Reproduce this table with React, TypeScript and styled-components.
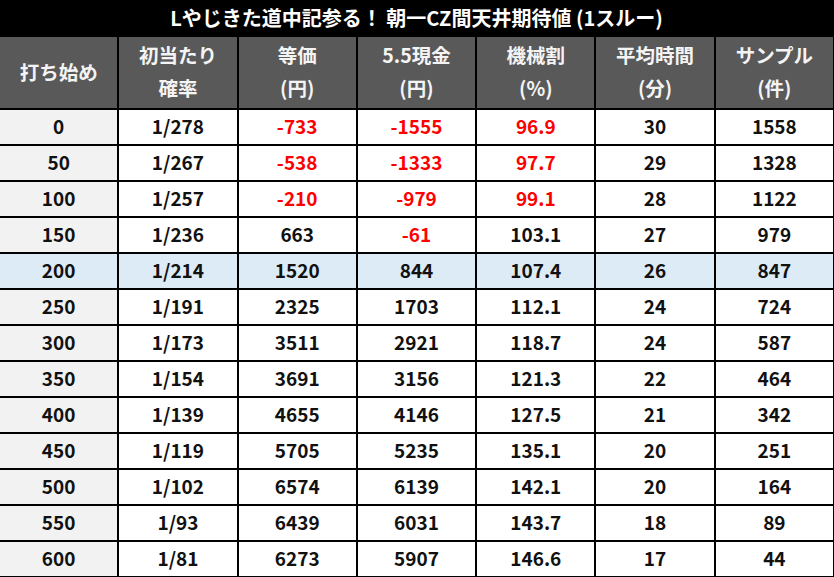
import React from "react";
import styled, { createGlobalStyle } from "styled-components";

const GlobalStyle = createGlobalStyle`
  html, body {
    margin: 0;
    padding: 0;
    background: #ffffff;
  }
  body {
    font-family: "Noto Sans CJK JP", "Noto Sans", sans-serif;
  }
`;

const Wrapper = styled.div`
  width: 834px;
  background: #000;
  padding-right: 1px;
  box-sizing: border-box;
`;

const Title = styled.div`
  height: 37px;
  display: flex;
  align-items: center;
  justify-content: center;
  color: #ffffff;
  font-weight: 700;
  font-size: 20px;
  line-height: 1;
  padding-bottom: 1px;
  box-sizing: border-box;
  background: #000;
  white-space: pre;
`;

const Grid = styled.div`
  display: grid;
  grid-template-columns: repeat(7, 1fr);
  grid-template-rows: 71px;
  grid-auto-rows: 34px;
  gap: 2px;
  padding-bottom: 2px;
  background: #000;
`;

const HeadCell = styled.div`
  background: #595959;
  color: #f4f4f4;
  font-weight: 700;
  font-size: 19.5px;
  line-height: 33px;
  display: flex;
  flex-direction: column;
  align-items: center;
  justify-content: center;
  text-align: center;
  white-space: nowrap;
  padding-bottom: 3px;
  box-sizing: border-box;
`;

const Cell = styled.div<{ $bg: string; $red?: boolean }>`
  background: ${(p) => p.$bg};
  color: ${(p) => (p.$red ? "#ff0000" : "#111111")};
  font-weight: 700;
  font-size: 19px;
  display: flex;
  align-items: center;
  justify-content: center;
  padding-bottom: 3px;
  box-sizing: border-box;
`;

type Row = [string, string, string, string, string, string, string];

const rows: Row[] = [
  ["0", "1/278", "-733", "-1555", "96.9", "30", "1558"],
  ["50", "1/267", "-538", "-1333", "97.7", "29", "1328"],
  ["100", "1/257", "-210", "-979", "99.1", "28", "1122"],
  ["150", "1/236", "663", "-61", "103.1", "27", "979"],
  ["200", "1/214", "1520", "844", "107.4", "26", "847"],
  ["250", "1/191", "2325", "1703", "112.1", "24", "724"],
  ["300", "1/173", "3511", "2921", "118.7", "24", "587"],
  ["350", "1/154", "3691", "3156", "121.3", "22", "464"],
  ["400", "1/139", "4655", "4146", "127.5", "21", "342"],
  ["450", "1/119", "5705", "5235", "135.1", "20", "251"],
  ["500", "1/102", "6574", "6139", "142.1", "20", "164"],
  ["550", "1/93", "6439", "6031", "143.7", "18", "89"],
  ["600", "1/81", "6273", "5907", "146.6", "17", "44"],
];

const headers: string[][] = [
  ["打ち始め"],
  ["初当たり", "確率"],
  ["等価", "(円)"],
  ["5.5現金", "(円)"],
  ["機械割", "(%)"],
  ["平均時間", "(分)"],
  ["サンプル", "(件)"],
];

const isRed = (col: number, v: string) => {
  if (col === 2 || col === 3) return v.startsWith("-");
  if (col === 4) return parseFloat(v) < 100;
  return false;
};

export default function App() {
  return (
    <>
      <GlobalStyle />
      <Wrapper>
        <Title>Lやじきた道中記参る！ 朝一CZ間天井期待値 (1スルー)</Title>
        <Grid>
          {headers.map((h, i) => (
            <HeadCell key={`h${i}`}>
              {h.map((line, j) => (
                <span key={j}>{line}</span>
              ))}
            </HeadCell>
          ))}
          {rows.map((r, ri) =>
            r.map((v, ci) => {
              const highlight = r[0] === "200";
              const bg = highlight ? "#ddebf7" : ci === 0 ? "#f2f2f2" : "#ffffff";
              return (
                <Cell key={`${ri}-${ci}`} $bg={bg} $red={isRed(ci, v)}>
                  {v}
                </Cell>
              );
            })
          )}
        </Grid>
      </Wrapper>
    </>
  );
}
